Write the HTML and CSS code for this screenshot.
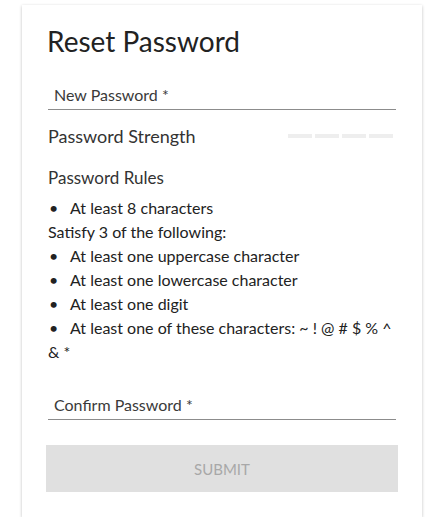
FILE: index.html
```html
<!DOCTYPE html>
<html>

<head>
    <title>Reset Password</title>
    <link rel="stylesheet" href="styles.css">
</head>

<body>
    <div class="reset-card">
        <h1>Reset Password</h1>

        <div class="field">
            <label>New Password *</label>
        </div>

        <div class="strength">
            <span class="strength-label">Password Strength</span>
            <div class="strength-bars">
                <span></span><span></span><span></span><span></span>
            </div>
        </div>

        <div class="rules">
            <h3>Password Rules</h3>
            <ul>
                <li>At least 8 characters</li>
            </ul>
            <p>Satisfy 3 of the following:</p>
            <ul>
                <li>At least one uppercase character</li>
                <li>At least one lowercase character</li>
                <li>At least one digit</li>
                <li>At least one of these characters: ~ ! @ # $ % ^ &amp; *</li>
            </ul>
        </div>

        <div class="field confirm">
            <label>Confirm Password *</label>
        </div>

        <button class="submit" disabled>Submit</button>
    </div>
</body>

</html>
```

FILE: styles.css
```css
body {
    margin: 0;
    font-family: Lato, "Open Sans", sans-serif;
    background-color: #fff;
    color: #222;
}

.reset-card {
    width: 400px;
    box-sizing: border-box;
    margin: 5px 0 0 22px;
    padding: 18px 26px 25px 26px;
    background-color: #fff;
    box-shadow: 0 1px 3px rgba(0, 0, 0, 0.25);
}

h1 {
    margin: 0 0 26px -1px;
    font-size: 28px;
    font-weight: 400;
    line-height: 36px;
    color: #222;
}

.field {
    border-bottom: 1px solid #8c8c8c;
    padding: 0 6px 4px;
}

.field label {
    display: block;
    font-size: 16px;
    line-height: 20px;
    color: #3a3a3a;
}

.strength {
    display: flex;
    align-items: center;
    justify-content: space-between;
    margin-top: 14px;
    padding-right: 3px;
}

.strength-label {
    font-size: 18px;
    line-height: 24px;
    color: #333;
}

.strength-bars {
    display: flex;
    gap: 3px;
}

.strength-bars span {
    width: 24px;
    height: 4px;
    background-color: #eee;
}

.rules {
    margin-top: 18px;
    font-size: 16px;
    line-height: 24px;
    color: #222;
}

.rules h3 {
    margin: 0 0 6px;
    font-size: 17px;
    font-weight: 400;
    line-height: 24px;
    color: #333;
}

.rules ul {
    margin: 0;
    padding: 0;
    list-style: none;
}

.rules li::before {
    content: "\2022";
    display: inline-block;
    width: 22px;
    padding-left: 1px;
    box-sizing: border-box;
}

.rules p {
    margin: 0;
}

.field.confirm {
    margin-top: 31px;
}

.submit {
    display: block;
    width: 352px;
    height: 47px;
    margin: 25px 0 0 -2px;
    border: none;
    background-color: #e0e0e0;
    color: #a8a8a8;
    font-family: inherit;
    font-size: 15px;
    text-transform: uppercase;
}
```
